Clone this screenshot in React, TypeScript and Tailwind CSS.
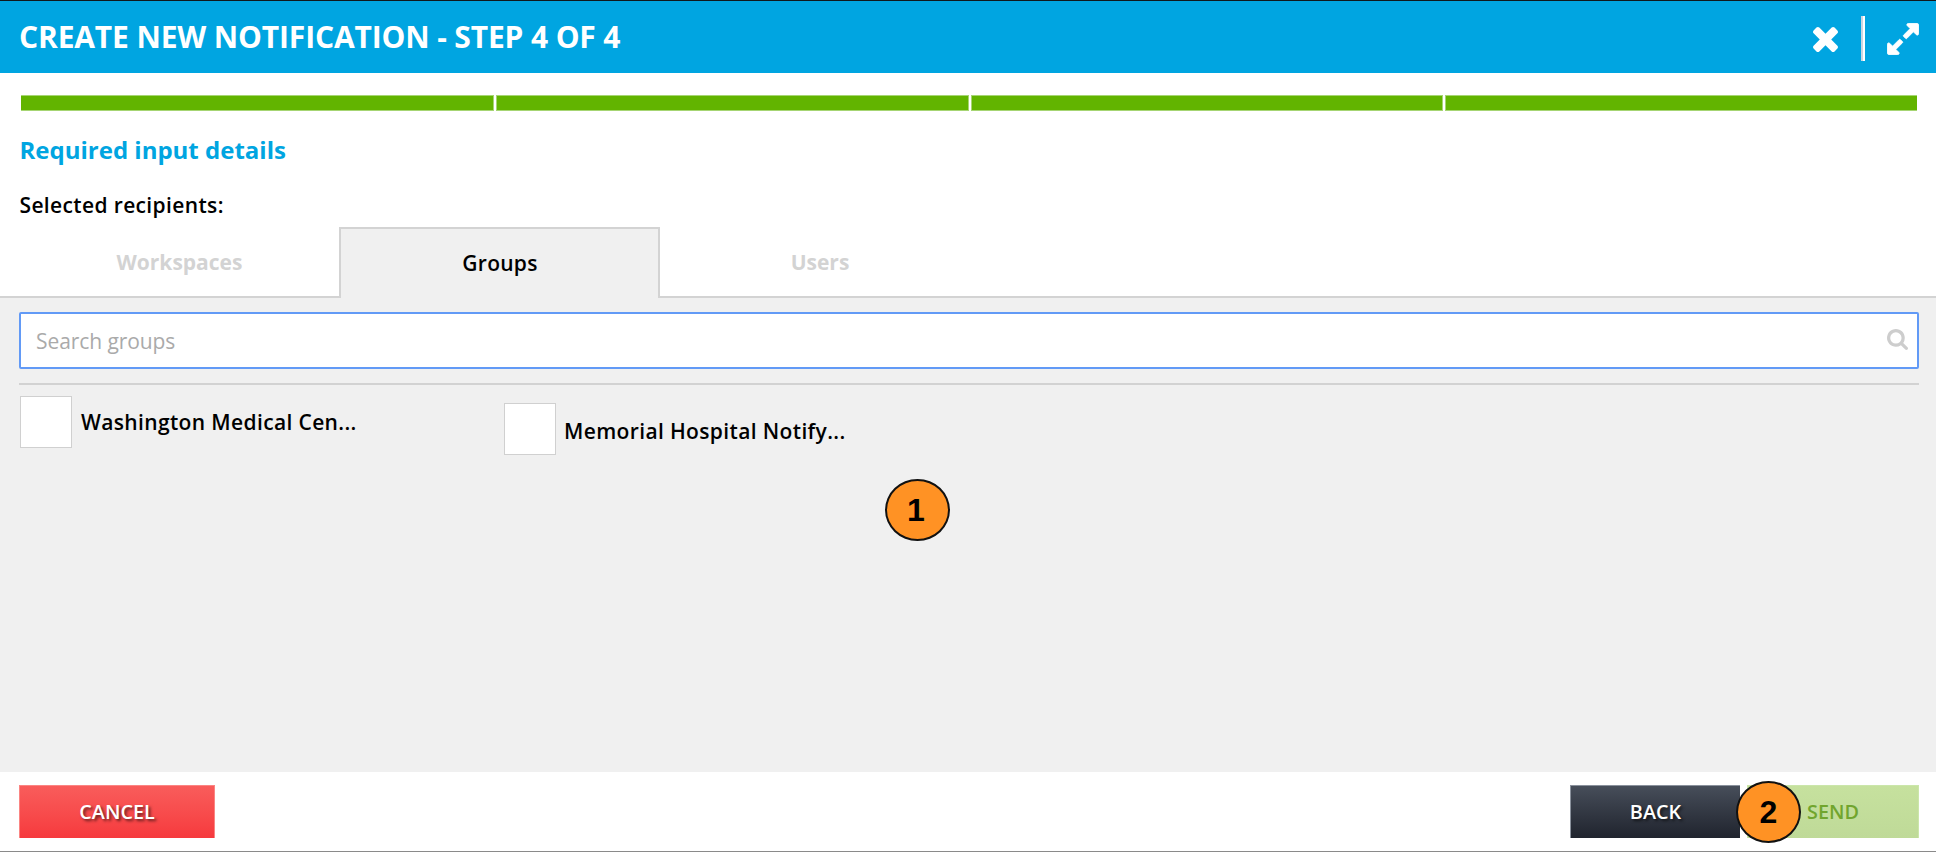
function TimesIcon() {
  return (
    <svg viewBox="302 366 1188 1188" className="h-[25px] w-[25px] fill-white" aria-hidden="true">
      <path d="M1490 1322q0 40-28 68l-136 136q-28 28-68 28t-68-28l-294-294-294 294q-28 28-68 28t-68-28l-136-136q-28-28-28-68t28-68l294-294-294-294q-28-28-28-68t28-68l136-136q28-28 68-28t68 28l294 294 294-294q28-28 68-28t68 28l136 136q28 28 28 68t-28 68l-294 294 294 294q28 28 28 68z" />
    </svg>
  );
}

function ExpandIcon() {
  return (
    <svg viewBox="106 106 1580 1580" className="h-8 w-8 fill-white stroke-white stroke-[44]" aria-hidden="true">
      <path d="M883 1056q0 13-10 23l-332 332 144 144q19 19 19 45t-19 45-45 19h-448q-26 0-45-19t-19-45v-448q0-26 19-45t45-19 45 19l144 144 332-332q10-10 23-10t23 10l114 114q10 10 10 23zm781-864v448q0 26-19 45t-45 19-45-19l-144-144-332 332q-10 10-23 10t-23-10l-114-114q-10-10-10-23t10-23l332-332-144-144q-19-19-19-45t19-45 45-19h448q26 0 45 19t19 45z" />
    </svg>
  );
}

function SearchIcon() {
  return (
    <svg viewBox="64 128 1664 1664" className="mb-[3px] h-[21px] w-[21px] fill-[#cdcdcd]" aria-hidden="true">
      <path d="M1216 832q0-185-131.5-316.5t-316.5-131.5-316.5 131.5-131.5 316.5 131.5 316.5 316.5 131.5 316.5-131.5 131.5-316.5zm512 832q0 52-38 90t-90 38q-54 0-90-38l-343-342q-179 124-399 124-143 0-273.5-55.5t-225-150-150-225-55.5-273.5 55.5-273.5 150-225 225-150 273.5-55.5 273.5 55.5 225 150 150 225 55.5 273.5q0 220-124 399l343 343q37 37 37 90z" />
    </svg>
  );
}

const badge =
  "absolute z-10 flex h-[62px] w-[65px] items-center justify-center rounded-[50%] border-2 border-[#111] bg-[#ff9224] font-['Liberation_Sans',sans-serif] text-[32px] leading-none font-bold text-black";

const checkbox = "h-[52px] w-[52px] shrink-0 border border-[#d0d0d0] bg-white";

export default function App() {
  return (
    <div className="relative flex h-[852px] w-full flex-col overflow-hidden border-b border-[#8a8a8a] bg-white font-['Open_Sans','Noto_Sans',sans-serif] text-black">
      <header className="flex h-[73px] shrink-0 items-center border-t border-[#10181c] bg-[#00a5e1] pr-[17px] pl-[19px]">
        <h1 className="pb-px text-[30px] leading-[70px] font-bold tracking-[-0.14px] whitespace-nowrap text-white">
          CREATE NEW NOTIFICATION - STEP 4 OF 4
        </h1>
        <div className="ml-auto flex items-center pt-[3px]">
          <button className="pt-px" aria-label="Close">
            <TimesIcon />
          </button>
          <span className="mr-[22px] ml-[23px] h-[45px] w-1 border-l-2 border-[#ccd6e2] bg-white" />
          <button aria-label="Expand">
            <ExpandIcon />
          </button>
        </div>
      </header>

      <div className="mt-[22px] flex h-4 shrink-0 gap-[2px] pr-[19px] pl-[21px]">
        <span className="w-[473px] border-y border-r border-[#a6d573] bg-[#62b400]" />
        <span className="flex-1 border border-[#a6d573] bg-[#62b400]" />
        <span className="flex-1 border border-[#a6d573] bg-[#62b400]" />
        <span className="flex-1 border-y border-l border-[#a6d573] bg-[#62b400]" />
      </div>

      <h2 className="mt-[23px] shrink-0 pl-[19.5px] text-[24px] leading-8 font-bold text-[#00a5e1]">
        Required input details
      </h2>
      <p className="mt-[25px] shrink-0 pl-[19.5px] text-[21px] leading-7 font-semibold tracking-[0.36px]">
        Selected recipients:
      </p>

      <nav className="mt-2 flex h-[71px] shrink-0 text-center text-[21px] leading-[68px] font-bold">
        <div className="w-[19px] border-b-2 border-[#d3d3d3]" />
        <div className="w-[320px] border-b-2 border-[#d3d3d3] pt-px pl-px text-[#d3d3d3]">Workspaces</div>
        <div className="w-[321px] border-x-2 border-t-2 border-[#d3d3d3] bg-[#f0f0f0] pl-px font-semibold tracking-[0.25px]">
          Groups
        </div>
        <div className="w-[320px] border-b-2 border-[#d3d3d3] pt-px text-[#d3d3d3]">Users</div>
        <div className="flex-1 border-b-2 border-[#d3d3d3]" />
      </nav>

      <main className="flex h-[474px] shrink-0 flex-col bg-[#f0f0f0] pt-[14px] pr-[17px] pl-[19px]">
        <div className="flex h-[57px] shrink-0 items-center rounded-[2px] border-2 border-[#629af6] bg-white pr-[9px] pl-[15px]">
          <span className="flex-1 pt-[2px] text-[21px] tracking-[-0.08px] text-[#aaaaaa]">Search groups</span>
          <SearchIcon />
        </div>
        <div className="mt-[14px] h-[2px] shrink-0 bg-[#d2d2d2]" />
        <div className="mt-[11px] flex items-start pl-px text-[21px] leading-[52px] font-semibold tracking-[0.36px]">
          <label className="flex w-[484px] gap-[9px]">
            <span className={checkbox} />
            Washington Medical Cen...
          </label>
          <label className="mt-[7px] flex gap-2">
            <span className={checkbox} />
            <span className="pt-[2px]">Memorial Hospital Notify...</span>
          </label>
        </div>
      </main>

      <footer className="flex flex-1 items-start bg-white pt-[13px] pr-[17px] pl-[19px] text-[19.8px] leading-[52px] font-semibold">
        <button className="h-[53px] w-[196px] border border-b-0 border-[#fb8583] bg-linear-to-b from-[#f95c5b] to-[#f6393d] text-white [text-shadow:2px_2px_3px_rgba(0,0,0,0.6)]">
          CANCEL
        </button>
        <button className="ml-auto h-[53px] w-[170px] border-t border-l border-[#8a919c] bg-linear-to-b from-[#474e5a] to-[#20242e] text-white [text-shadow:2px_2px_3px_rgba(0,0,0,0.6)]">
          BACK
        </button>
        <button className="ml-[7px] h-[53px] w-[172px] border border-b-0 border-[#cbe6aa] bg-linear-to-b from-[#c6e19e] to-[#bfda98] text-[#71a52e]">
          SEND
        </button>
      </footer>

      <span className={`${badge} top-[479px] left-[885px] pr-[3px]`}>1</span>
      <span className={`${badge} top-[781px] left-[1736px]`}>2</span>
    </div>
  );
}
